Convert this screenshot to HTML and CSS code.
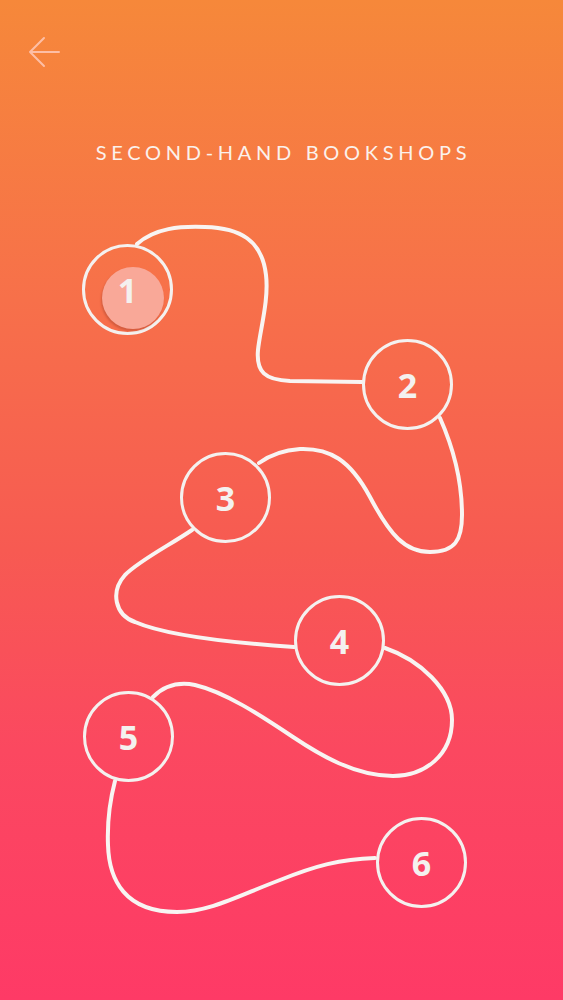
FILE: index.html
```html
<!DOCTYPE html>
<html>
<head>
<meta charset="utf-8">
<link rel="stylesheet" href="styles.css">
</head>
<body>
<div class="screen">
  <header class="top">
    <svg class="back" width="34" height="34" viewBox="0 0 34 34" aria-label="Back">
      <path d="M32 16 H3 M17 2 L3 16 L17 30" fill="none" stroke="currentColor" stroke-width="2" stroke-linecap="round" stroke-linejoin="round"/>
    </svg>
    <h1 class="title">SECOND-HAND BOOKSHOPS</h1>
  </header>
  <div class="map">
    <svg class="route" width="563" height="800" viewBox="0 200 563 800">
      <path d="M137,244 C155,228 180,226 205,227 C240,228 262,240 266,275 C269,300 260,330 258,350 C256,372 265,380 290,381 L362,382" />
      <path d="M440,418 C452,445 462,480 462,515 C462,540 455,552 430,552 C405,552 390,535 370,497 C350,460 330,448 300,449 C285,450 270,455 259,463" />
      <path d="M192,530 C170,545 140,560 125,575 C110,592 115,615 135,622 C165,635 220,642 294,647" />
      <path d="M385,648 C420,660 452,690 452,720 C452,755 425,776 393,776 C355,776 320,755 293,737 C260,715 225,692 195,685 C175,681 162,688 153,697" />
      <path d="M115,781 C110,800 107,820 108,845 C109,880 125,912 177,912 C210,912 240,895 280,880 C315,866 340,859 375,858" />
    </svg>
    <div class="node n1"><span class="press"></span><span class="num">1</span></div>
    <div class="node n2"><span class="num">2</span></div>
    <div class="node n3"><span class="num">3</span></div>
    <div class="node n4"><span class="num">4</span></div>
    <div class="node n5"><span class="num">5</span></div>
    <div class="node n6"><span class="num">6</span></div>
  </div>
</div>
</body>
</html>
```
FILE: styles.css
```css
html, body {
  margin: 0;
  padding: 0;
}
body {
  width: 563px;
  height: 1000px;
  overflow: hidden;
}
.screen {
  width: 563px;
  height: 1000px;
  background: linear-gradient(180deg, #f6883a 0%, #f7704a 30%, #f75a52 55%, #fb4860 75%, #fe3a66 100%);
  display: flex;
  flex-direction: column;
  font-family: Lato, "Open Sans", sans-serif;
}
.top {
  height: 200px;
  padding: 36px 0 0 27px;
  box-sizing: border-box;
  display: flex;
  flex-direction: column;
}
.back {
  color: rgba(255, 210, 200, 0.75);
  display: block;
}
.title {
  margin: 70px 0 0 -27px;
  text-align: center;
  color: #fbf1ec;
  font-size: 20px;
  font-weight: 400;
  letter-spacing: 4.7px;
  line-height: 24px;
  padding-left: 4px;
}
.map {
  position: relative;
  height: 800px;
}
.route {
  position: absolute;
  left: 0;
  top: 0;
}
.route path {
  fill: none;
  stroke: #f8f4f2;
  stroke-width: 4;
  stroke-linecap: round;
}
.node {
  position: absolute;
  width: 91px;
  height: 91px;
  box-sizing: border-box;
  border: 3.5px solid #f4f1ef;
  border-radius: 50%;
  display: flex;
  align-items: center;
  justify-content: center;
}
.num {
  position: relative;
  color: #f4f1ef;
  font-family: "Open Sans", Lato, sans-serif;
  font-weight: 700;
  font-size: 34px;
  line-height: 1;
}
.press {
  position: absolute;
  left: 17px;
  top: 20px;
  width: 62px;
  height: 62px;
  border-radius: 50%;
  background: #f9a898;
  box-shadow: -1px 2px 2px rgba(150, 60, 40, 0.35);
}
.n1 { left: 82px;  top: 44px; }
.n2 { left: 362px; top: 139px; }
.n3 { left: 180px; top: 252px; }
.n4 { left: 294px; top: 395px; }
.n5 { left: 83px;  top: 491px; }
.n6 { left: 376px; top: 617px; }
```
